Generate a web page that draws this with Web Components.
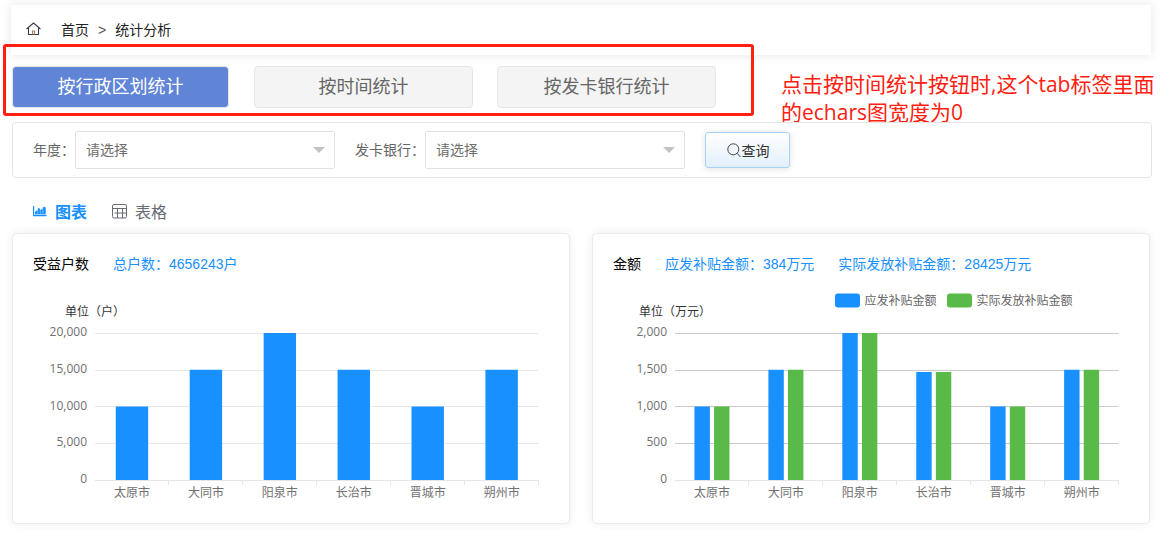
<!DOCTYPE html>
<html lang="zh-CN">
<head>
<meta charset="utf-8">
<title>统计分析</title>
<style>
  html, body { margin: 0; padding: 0; }
  body {
    width: 1170px;
    height: 546px;
    overflow: hidden;
    background: #fff;
    font-family: "Liberation Sans", "Noto Sans CJK SC", sans-serif;
    font-size: 14px;
    color: #333;
  }
</style>
</head>
<body>
<stat-page>
  <wc-breadcrumb>
    <span>首页</span><span>&gt;</span><span>统计分析</span>
  </wc-breadcrumb>
  <wc-tabs>
    <wc-tab active>按行政区划统计</wc-tab>
    <wc-tab>按时间统计</wc-tab>
    <wc-tab>按发卡银行统计</wc-tab>
  </wc-tabs>
  <wc-filter>
    <wc-select label="年度：">请选择</wc-select>
    <wc-select label="发卡银行：">请选择</wc-select>
    <wc-search-button>查询</wc-search-button>
  </wc-filter>
  <wc-view-switch></wc-view-switch>
  <wc-cards>
    <wc-card>
      <span slot="title">受益户数</span>
      <span slot="info">总户数：4656243户</span>
      <wc-bar-chart id="family"></wc-bar-chart>
    </wc-card>
    <wc-card>
      <span slot="title">金额</span>
      <span slot="info">应发补贴金额：384万元</span>
      <span slot="info">实际发放补贴金额：28425万元</span>
      <wc-bar-chart id="money"></wc-bar-chart>
    </wc-card>
  </wc-cards>
  <wc-note slot="note">点击按时间统计按钮时,这个tab标签里面<br>的echars图宽度为0</wc-note>
</stat-page>

<script>
  // 公共基类
  class BaseElement extends HTMLElement {
    constructor() {
      super();
      this.attachShadow({ mode: 'open' });
    }

    connectedCallback() {
      this.render();
    }

    render() {
      const template = document.createElement('template');
      template.innerHTML = `<style>${this.getStyle()}</style>${this.getTemplate()}`;
      this.shadowRoot.innerHTML = '';
      this.shadowRoot.appendChild(template.content.cloneNode(true));
    }

    getTemplate() {
      return '<slot></slot>';
    }

    getStyle() {
      return '';
    }
  }

  class StatPage extends BaseElement {
    getTemplate() {
      return `
        <main><slot></slot></main>
        <div class="mark"></div>
        <slot name="note"></slot>
      `;
    }

    getStyle() {
      return `
        :host { display: block; position: relative; width: 1170px; height: 546px; }
        main { display: flex; flex-direction: column; padding: 5px 18px 0 12px; }
        .mark {
          position: absolute;
          left: 3px;
          top: 44px;
          width: 751px;
          height: 72px;
          box-sizing: border-box;
          border: 3px solid #ff2010;
          border-radius: 3px;
        }
      `;
    }
  }

  class WcBreadcrumb extends BaseElement {
    getTemplate() {
      return `
        <svg width="15" height="14" viewBox="0 0 15 14" fill="none" stroke="#3a3a48" stroke-width="1.1">
          <path d="M.6 7 7.5 1l6.900 6M2.500 5.600v6.900h10V5.600"/>
          <path d="M6.500 12.500V9h2v3.500" stroke="#a08060"/>
        </svg>
        <nav><slot></slot></nav>
      `;
    }

    getStyle() {
      return `
        :host {
          display: flex;
          align-items: center;
          box-sizing: border-box;
          height: 50px;
          margin-left: -1px;
          margin-right: 1px;
          padding-left: 15px;
          background: #fff;
          box-shadow: 0 0 10px rgba(0, 0, 0, .1);
        }
        svg { margin-bottom: 2px; }
        nav { display: flex; gap: 9px; margin-left: 20px; line-height: 20px; color: #222; }
        ::slotted(:nth-child(2)) { color: #555; }
      `;
    }
  }

  class WcTabs extends BaseElement {
    getStyle() {
      return `
        :host { display: flex; gap: 24px; margin-top: 11px; }
      `;
    }
  }

  class WcTab extends BaseElement {
    getStyle() {
      return `
        :host {
          box-sizing: border-box;
          width: 219px;
          height: 42px;
          border: 1px solid #e6e6e6;
          border-radius: 4px;
          background: #f4f4f4;
          color: #666;
          font-size: 18px;
          line-height: 41px;
          text-align: center;
        }
        :host([active]) { width: 217px; margin-right: 1px; background: #6085d6; color: #fff; }
      `;
    }
  }

  class WcFilter extends BaseElement {
    getStyle() {
      return `
        :host {
          position: relative;
          z-index: 2;
          display: flex;
          align-items: center;
          gap: 20px;
          box-sizing: border-box;
          height: 56px;
          margin-top: 14px;
          padding-left: 20px;
          border: 1px solid #e4e4e4;
          border-radius: 4px;
          background: #fff;
        }
      `;
    }
  }

  class WcSelect extends BaseElement {
    getTemplate() {
      return `
        <label>${this.getAttribute('label')}</label>
        <div class="box">
          <span><slot></slot></span>
          <i></i>
        </div>
      `;
    }

    getStyle() {
      return `
        :host { display: flex; align-items: center; color: #666; }
        label, span { padding-bottom: 2px; }
        .box {
          display: flex;
          align-items: center;
          justify-content: space-between;
          box-sizing: border-box;
          width: 260px;
          height: 38px;
          padding: 0 9px 0 10px;
          border: 1px solid #e2e2e2;
          border-radius: 2px;
          color: #6e6e6e;
        }
        i { border: 6px solid transparent; border-top-color: #c2c2c2; border-bottom: 0; }
      `;
    }
  }

  class WcSearchButton extends BaseElement {
    getTemplate() {
      return `
        <svg width="14" height="15" viewBox="0 0 14 15" fill="none" stroke="#444" stroke-width="1">
          <circle cx="6.300" cy="6.300" r="5.500"/>
          <path d="m10.200 10.400 3.200 3.600"/>
        </svg>
        <slot></slot>
      `;
    }

    getStyle() {
      return `
        :host {
          display: flex;
          align-items: center;
          justify-content: center;
          gap: 1px;
          box-sizing: border-box;
          width: 85px;
          height: 36px;
          border: 1px solid #a9d0f5;
          border-radius: 3px;
          background: linear-gradient(#fff, #e2f0fb);
          box-shadow: 0 1px 6px rgba(0, 0, 0, .12);
          color: #333;
        }
        svg { margin-left: 1px; }
      `;
    }
  }

  class WcViewSwitch extends BaseElement {
    getTemplate() {
      return `
        <div class="item on">
          <svg width="14" height="12" viewBox="0 0 14 12" fill="#1890ff">
            <path d="M0 1h1.200v9H13.500v1.200H0z"/>
            <path d="M2 9.600V6.800L3.700 5.500l.9.900V3.900L6.300 2.600l.8 2.600L8.300 4l1.400.8V2.700L11.400 1.500l1.300 1.200v6.900z"/>
            <path d="M4.700 6.500v3M7.300 5.200v4.300M9.900 4.800v4.700" stroke="#fff" stroke-width=".4"/>
          </svg>
          <span>图表</span>
        </div>
        <div class="item">
          <svg width="15" height="15" viewBox="0 0 15 15" fill="none" stroke="#666b75" stroke-width="1">
            <rect x=".5" y=".5" width="14" height="13.500" rx="1.500"/>
            <path d="M.5 4.500h14M2.500 9h12M5.500 4.500v9.500M10.500 4.500v9.500"/>
          </svg>
          <span>表格</span>
        </div>
      `;
    }

    getStyle() {
      return `
        :host { display: flex; gap: 25px; margin-top: 21px; padding-left: 21px; }
        .item { display: flex; align-items: center; height: 24px; font-size: 16px; color: #666b75; }
        .item span { margin-left: 8px; }
        .on { color: #1890ff; font-weight: bold; }
      `;
    }
  }

  class WcCards extends BaseElement {
    getStyle() {
      return `
        :host { display: grid; grid-template-columns: 558px 558px; gap: 22px; margin-top: 10px; }
      `;
    }
  }

  class WcCard extends BaseElement {
    getTemplate() {
      return `
        <header>
          <slot name="title"></slot>
          <slot name="info"></slot>
        </header>
        <slot></slot>
      `;
    }

    getStyle() {
      return `
        :host {
          box-sizing: border-box;
          height: 291px;
          border: 1px solid #ebebeb;
          border-radius: 5px;
          background: #fff;
          box-shadow: 0 0 10px rgba(0, 0, 0, .07);
        }
        header { display: flex; gap: 24px; height: 20px; padding: 20px 20px 0; line-height: 20px; }
        ::slotted([slot=title]) { color: #000; }
        ::slotted([slot=info]) { color: #1890ff; }
      `;
    }
  }

  // 柱状图，坐标系与卡片内部一致
  class WcBarChart extends BaseElement {
    set option(value) {
      this._option = value;
      this.render();
    }

    getTemplate() {
      if (!this._option) return '';
      const { unit, max, splitColor, barWidth, barGap, categories, series, legend } = this._option;
      const left = 82;
      const top = 59;
      const width = 443.6;
      const height = 147;
      const bottom = top + height;
      const band = width / categories.length;
      let svg = '';

      for (let i = 0; i <= 4; i++) {
        const y = Math.round(bottom - height * i / 4 - 0.1) + 0.5;
        const color = i === 0 ? '#e5e5e5' : splitColor;
        svg += `<path d="M${left} ${y}h${width}" stroke="${color}"/>`;
        svg += `<text x="${left - 8}" y="${Math.round(bottom - height * i / 4) + 3}" text-anchor="end">${(max * i / 4).toLocaleString('en-US')}</text>`;
      }

      const groupWidth = barWidth * series.length + barGap * (series.length - 1);
      categories.forEach((name, i) => {
        const center = left + band * (i + 0.5);
        const tick = Math.floor(left + band * (i + 1)) + 0.5;
        svg += `<path d="M${tick} ${bottom}v5" stroke="#e5e5e5"/>`;
        svg += `<text x="${center}" y="${bottom + 17}" text-anchor="middle">${name}</text>`;
        series.forEach((item, j) => {
          const h = height * item.data[i] / max;
          const x = center - groupWidth / 2 + j * (barWidth + barGap);
          svg += `<rect x="${x}" y="${bottom - h}" width="${barWidth}" height="${h}" fill="${item.color}"/>`;
        });
      });

      svg += `<text class="unit" x="${left}" y="42" text-anchor="middle">${unit}</text>`;
      (legend || []).forEach((x, j) => {
        svg += `<rect x="${x}" y="19.500" width="25" height="14" rx="3" fill="${series[j].color}"/>`;
        svg += `<text class="legend" x="${x + 29.5}" y="30.500">${series[j].name}</text>`;
      });

      return `<svg width="556" height="249" viewBox="0 0 556 249">${svg}</svg>`;
    }

    getStyle() {
      return `
        :host { display: block; }
        svg { display: block; fill: none; }
        text { font: 12px "Open Sans", "Noto Sans CJK SC", sans-serif; fill: #707070; }
        .unit { fill: #333; }
        .legend { fill: #666; }
      `;
    }
  }

  class WcNote extends BaseElement {
    getStyle() {
      return `
        :host {
          position: absolute;
          left: 781px;
          top: 70px;
          color: #ff2010;
          font: 21px/28px "Open Sans", "Noto Sans CJK SC", sans-serif;
          white-space: nowrap;
        }
      `;
    }
  }

  customElements.define('stat-page', StatPage);
  customElements.define('wc-breadcrumb', WcBreadcrumb);
  customElements.define('wc-tabs', WcTabs);
  customElements.define('wc-tab', WcTab);
  customElements.define('wc-filter', WcFilter);
  customElements.define('wc-select', WcSelect);
  customElements.define('wc-search-button', WcSearchButton);
  customElements.define('wc-view-switch', WcViewSwitch);
  customElements.define('wc-cards', WcCards);
  customElements.define('wc-card', WcCard);
  customElements.define('wc-bar-chart', WcBarChart);
  customElements.define('wc-note', WcNote);

  const cities = ['太原市', '大同市', '阳泉市', '长治市', '晋城市', '朔州市'];

  document.getElementById('family').option = {
    unit: '单位（户）',
    max: 20000,
    splitColor: '#e8e8e8',
    barWidth: 32.4,
    barGap: 0,
    categories: cities,
    series: [
      { name: '受益户数', color: '#1890ff', data: [10000, 15000, 20000, 15000, 10000, 15000] }
    ]
  };

  document.getElementById('money').option = {
    unit: '单位（万元）',
    max: 2000,
    splitColor: '#ccc',
    barWidth: 15.4,
    barGap: 4.2,
    categories: cities,
    legend: [242, 354],
    series: [
      { name: '应发补贴金额', color: '#1890ff', data: [1000, 1500, 2000, 1470, 1000, 1500] },
      { name: '实际发放补贴金额', color: '#5aba47', data: [1000, 1500, 2000, 1470, 1000, 1500] }
    ]
  };
</script>
</body>
</html>
